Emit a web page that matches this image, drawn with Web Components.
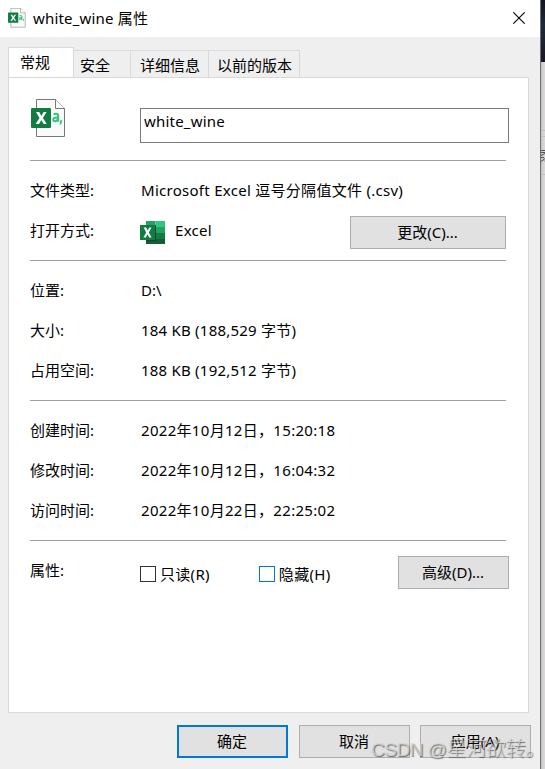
<!DOCTYPE html>
<html lang="zh-CN">
<head>
<meta charset="UTF-8">
<title>white_wine 属性</title>
<style>
    body {
        margin: 0;
        width: 545px;
        height: 769px;
        overflow: hidden;
        display: flex;
        font: 15px/20px "Noto Sans", "Noto Sans CJK SC", sans-serif;
        color: #000;
    }
</style>
</head>
<body>
<properties-dialog></properties-dialog>
<desktop-edge></desktop-edge>

<script>
class CsvIcon extends HTMLElement {
    constructor() {
        super();
        this.attachShadow({ mode: 'open' });
        this.shadowRoot.innerHTML = `
            <style>
                :host { display: block; width: 35px; height: 39px; }
                svg { display: block; width: 100%; height: 100%; }
            </style>
            <svg viewBox="0 0 35 39">
                <path d="M5.5.5H24.5L33.5 9.500V37.500H5.500Z" fill="#fafafa" stroke="#797774"/>
                <path d="M24.500.5V9.500H33.500" fill="#fff" stroke="#797774"/>
                <rect x="0" y="9" width="20" height="20" rx="1.200" fill="#107c41"/>
                <path d="M5 13h3.200l2.200 4 2.200-4h3l-3.700 6 3.900 6h-3.200l-2.300-4.100-2.300 4.100H4.600l3.900-6z" fill="#fff"/>
                <path d="M22.700 15.600q1-.9 2.300-.9 2.200 0 2.200 2.400V22.800M27 18.300q-4.700.2-4.700 2.400 0 1.500 1.500 1.500 2.500 0 3.200-2.700" fill="none" stroke="#33c481" stroke-width="2"/>
                <path d="M29.200 21.300h2.200l-1.300 4.200h-1.500z" fill="#33c481"/>
            </svg>
        `;
    }
}
customElements.define('csv-icon', CsvIcon);

class ExcelIcon extends HTMLElement {
    constructor() {
        super();
        this.attachShadow({ mode: 'open' });
        this.shadowRoot.innerHTML = `
            <style>
                :host { display: block; width: 25px; height: 23px; }
                svg { display: block; }
            </style>
            <svg width="25" height="23" viewBox="0 0 25 23">
                <path d="M6 0h9.500v6H6z" fill="#21a366"/>
                <path d="M15.500 0H25v6h-9.500z" fill="#33c481"/>
                <path d="M6 6h9.500v6H6z" fill="#107c41"/>
                <path d="M15.500 6H25v6h-9.500z" fill="#21a366"/>
                <path d="M6 12h9.500v6H6z" fill="#185c37"/>
                <path d="M15.500 12H25v6h-9.500z" fill="#107c41"/>
                <path d="M6 18h19v5H6z" fill="#185c37"/>
                <path d="M6 4h10v16H6z" fill="#0b4a28"/>
                <path d="M0 4h15v15H0z" fill="#107c41"/>
                <path d="M3.700 6.500h2.500l1.500 3 1.600-3h2.200l-2.700 4.900 2.800 5H9.200l-1.700-3.200-1.700 3.200H3.400l2.800-5z" fill="#fff"/>
            </svg>
        `;
    }
}
customElements.define('excel-icon', ExcelIcon);

class TitleBar extends HTMLElement {
    constructor() {
        super();
        this.attachShadow({ mode: 'open' });
        this.shadowRoot.innerHTML = `
            <style>
                :host {
                    display: flex;
                    align-items: center;
                    height: 37px;
                    padding: 0 15px 0 8px;
                    box-sizing: border-box;
                    background: #fff;
                }
                csv-icon { width: 18px; height: 20px; margin: -1px 7px 0 0; }
                .title { flex: 1; margin-top: -1px; letter-spacing: 0.18px; }
                svg { display: block; margin-top: -1px; }
            </style>
            <csv-icon></csv-icon>
            <span class="title"><slot></slot></span>
            <svg width="12" height="12" viewBox="0 0 12 12"><path d="M.3.3l11.400 11.400M11.700.3L.3 11.700" stroke="#000" stroke-width="1.100"/></svg>
        `;
    }
}
customElements.define('title-bar', TitleBar);

class TabItem extends HTMLElement {
    constructor() {
        super();
        this.attachShadow({ mode: 'open' });
        this.shadowRoot.innerHTML = `
            <style>
                :host {
                    display: block;
                    box-sizing: border-box;
                    height: 27px;
                    padding-top: 4px;
                    border: 1px solid #d9d9d9;
                    border-width: 1px 1px 0 0;
                    background: #efefef;
                    white-space: nowrap;
                }
                :host([active]) {
                    height: 31px;
                    margin-bottom: -1px;
                    border-left-width: 1px;
                    background: #fff;
                }
            </style>
            <slot></slot>
        `;
    }
}
customElements.define('tab-item', TabItem);

class PushButton extends HTMLElement {
    constructor() {
        super();
        this.attachShadow({ mode: 'open' });
        this.shadowRoot.innerHTML = `
            <style>
                :host {
                    display: flex;
                    align-items: center;
                    justify-content: center;
                    box-sizing: border-box;
                    width: 111px;
                    height: 33px;
                    padding: 0 1px 2px 0;
                    border: 1px solid #adadad;
                    background: #e1e1e1;
                    white-space: nowrap;
                }
                :host([primary]) { border: 2px solid #0078d7; }
            </style>
            <span><slot></slot></span>
        `;
    }
}
customElements.define('push-button', PushButton);

class CheckField extends HTMLElement {
    constructor() {
        super();
        this.attachShadow({ mode: 'open' });
        this.shadowRoot.innerHTML = `
            <style>
                :host { display: flex; align-items: center; gap: 4px; white-space: nowrap; letter-spacing: 0.3px; }
                .box {
                    box-sizing: border-box;
                    width: 16px;
                    height: 16px;
                    border: 1px solid #333;
                    background: #fff;
                }
                :host([hot]) .box { border-color: #0078d7; }
            </style>
            <span class="box"></span>
            <span><slot></slot></span>
        `;
    }
}
customElements.define('check-field', CheckField);

class PropertyRow extends HTMLElement {
    constructor() {
        super();
        this.attachShadow({ mode: 'open' });
        this.shadowRoot.innerHTML = `
            <style>
                :host {
                    display: grid;
                    grid-template-columns: 111px 1fr;
                    align-items: center;
                    height: 40px;
                    white-space: nowrap;
                }
                .value { display: flex; align-items: center; letter-spacing: var(--spacing, 0); }
            </style>
            <span>${this.getAttribute('label')}:</span>
            <span class="value"><slot></slot></span>
        `;
    }
}
customElements.define('property-row', PropertyRow);

class PropertyGroup extends HTMLElement {
    constructor() {
        super();
        this.attachShadow({ mode: 'open' });
        this.shadowRoot.innerHTML = `
            <style>
                :host {
                    display: block;
                    width: 476px;
                    padding: 9px 0 10px;
                    border-top: 1px solid #a0a0a0;
                }
            </style>
            <slot></slot>
        `;
    }
}
customElements.define('property-group', PropertyGroup);

class PropertiesDialog extends HTMLElement {
    constructor() {
        super();
        this.attachShadow({ mode: 'open' });
        this.shadowRoot.innerHTML = `
            <style>
                :host {
                    display: flex;
                    flex-direction: column;
                    position: relative;
                    width: 540px;
                    height: 769px;
                    background: #efefef;
                }
                .tabs { display: flex; align-items: flex-end; height: 40px; padding-left: 8px; }
                .panel {
                    box-sizing: border-box;
                    width: 521px;
                    height: 636px;
                    margin-left: 8px;
                    padding-left: 21px;
                    border: 1px solid #d9d9d9;
                    background: #fff;
                }
                .header { display: flex; height: 82px; align-items: flex-start; }
                .header csv-icon { margin: 21px 74px 0 1px; }
                .name {
                    box-sizing: border-box;
                    width: 369px;
                    height: 35px;
                    margin-top: 30px;
                    padding: 2px 3px;
                    border: 1px solid #7a7a7a;
                    letter-spacing: 0.2px;
                }
                .file-type { --spacing: 0.28px; }
                .size { --spacing: 0.22px; }
                .date { --spacing: 0.31px; }
                excel-icon { margin: 4px 10px 0 -1px; }
                .app { flex: 1; letter-spacing: 0.3px; }
                .change { width: 156px; margin-top: 5px; }
                .read { margin: 8px 49px 0 -1px; }
                .hidden { margin-top: 8px; }
                .advanced { margin: 5px -3px 0 auto; }
                .footer { display: flex; gap: 11px; padding: 12px 0 0 177px; }
                .apply { margin-left: -1px; }
                .watermark {
                    position: absolute;
                    left: 371px;
                    top: 737px;
                    font: 20px/24px "Liberation Sans", "Noto Sans CJK SC", sans-serif;
                    font-weight: 300;
                    letter-spacing: -0.25px;
                    white-space: nowrap;
                    color: rgba(215, 215, 215, 0.8);
                    text-shadow: 1px 1px 1px rgba(70, 70, 70, 0.75);
                }
                .watermark span { font-size: 19px; letter-spacing: -0.5px; }
            </style>
            <title-bar>white_wine 属性</title-bar>
            <div class="tabs">
                <tab-item active style="width:66px;padding-left:11px">常规</tab-item>
                <tab-item style="width:57px;padding-left:6px">安全</tab-item>
                <tab-item style="width:78px;padding-left:9px">详细信息</tab-item>
                <tab-item style="width:91px;padding-left:8px">以前的版本</tab-item>
            </div>
            <div class="panel">
                <div class="header">
                    <csv-icon></csv-icon>
                    <div class="name">white_wine</div>
                </div>
                <property-group>
                    <property-row class="file-type" label="文件类型">Microsoft Excel 逗号分隔值文件 (.csv)</property-row>
                    <property-row label="打开方式">
                        <excel-icon></excel-icon>
                        <span class="app">Excel</span>
                        <push-button class="change">更改(C)...</push-button>
                    </property-row>
                </property-group>
                <property-group>
                    <property-row label="位置">D:\\</property-row>
                    <property-row class="size" label="大小">184 KB (188,529 字节)</property-row>
                    <property-row class="size" label="占用空间">188 KB (192,512 字节)</property-row>
                </property-group>
                <property-group>
                    <property-row class="date" label="创建时间">2022年10月12日，15:20:18</property-row>
                    <property-row class="date" label="修改时间">2022年10月12日，16:04:32</property-row>
                    <property-row class="date" label="访问时间">2022年10月22日，22:25:02</property-row>
                </property-group>
                <property-group>
                    <property-row label="属性">
                        <check-field class="read">只读(R)</check-field>
                        <check-field class="hidden" hot>隐藏(H)</check-field>
                        <push-button class="advanced">高级(D)...</push-button>
                    </property-row>
                </property-group>
            </div>
            <div class="footer">
                <push-button primary>确定</push-button>
                <push-button>取消</push-button>
                <push-button class="apply">应用(A)</push-button>
            </div>
            <div class="watermark"><span>CSDN @</span>星河欲转。</div>
        `;
    }
}
customElements.define('properties-dialog', PropertiesDialog);

// sliver of the window behind the dialog
class DesktopEdge extends HTMLElement {
    constructor() {
        super();
        this.attachShadow({ mode: 'open' });
        this.shadowRoot.innerHTML = `
            <style>
                :host {
                    display: flex;
                    flex-direction: column;
                    box-sizing: border-box;
                    width: 5px;
                    height: 769px;
                    border-left: 1px solid #6e6e6e;
                    background: linear-gradient(90deg, #c6c4c4, #dcdada);
                }
                .dark { height: 62px; background: linear-gradient(#16141f, #1c2a3a 40%, #1a1824); }
                .gap { height: 68px; }
                .bar { height: 5px; border: 1px solid #c0bebe; border-width: 1px 0; }
                .field { height: 37px; border-bottom: 1px solid #c0bebe; }
                svg { display: block; margin-top: 13px; }
            </style>
            <div class="dark"></div>
            <div class="gap"></div>
            <div class="bar"></div>
            <div class="field">
                <svg width="4" height="13" viewBox="0 0 4 13"><path d="M0 .5h4M0 2.500h4M0 5.500l4-2M0 7.500h3M0 11.500l4-3M3 10.500l1 1" fill="none" stroke="#555058"/></svg>
            </div>
        `;
    }
}
customElements.define('desktop-edge', DesktopEdge);
</script>
</body>
</html>
